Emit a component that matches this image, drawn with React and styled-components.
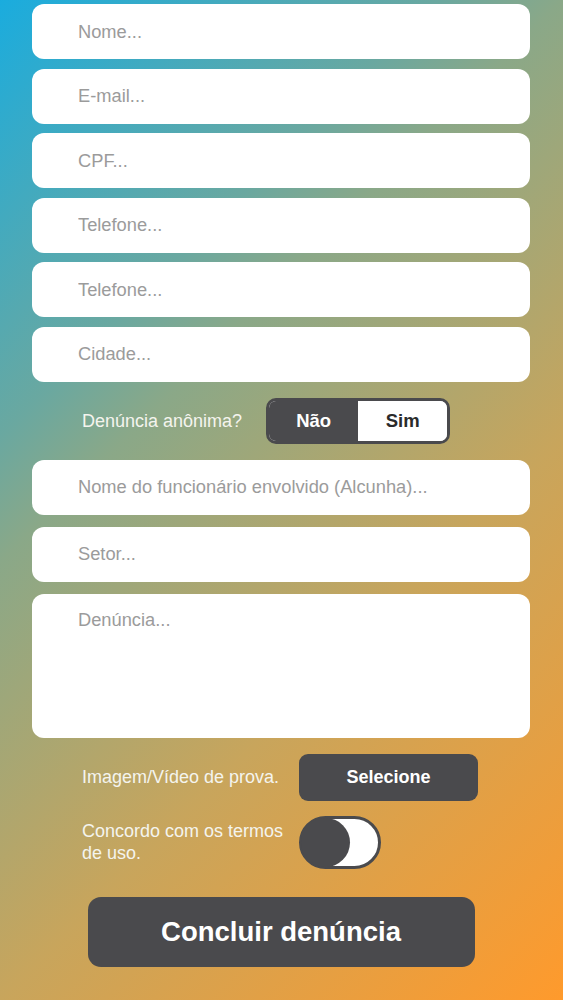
import { useState } from 'react';
import styled, { createGlobalStyle } from 'styled-components';

// ─── css ───────────────────────────────────────────────────────────────
const GlobalStyle = createGlobalStyle`
  html, body { margin: 0; padding: 0; }
  body {
    font-family: "Liberation Sans", Arial, sans-serif;
    min-height: 1000px;
    background: linear-gradient(135deg, #1aacde 0%, #6aa8a0 28%, #8aa888 36%, #c8a55c 64%, #ff9a2c 100%);
    background-attachment: fixed;
  }
  * { box-sizing: border-box; }
`;

const DARK = '#4a4a4d';

const Page = styled.div`
  display: flex;
  flex-direction: column;
  padding: 4px 33px 30px 32px;
  min-height: 1000px;
`;

const Fields = styled.div`
  display: flex;
  flex-direction: column;
  gap: ${({ $gap }) => $gap}px;
`;

const Input = styled.input`
  width: 100%;
  height: 55px;
  border: none;
  outline: none;
  border-radius: 12px;
  background: #fff;
  padding: 0 20px 0 46px;
  font-family: inherit;
  font-size: 18.3px;
  color: #333;
  &::placeholder { color: #9b9b9b; }
`;

const TextArea = styled.textarea`
  width: 100%;
  height: 144px;
  border: none;
  outline: none;
  resize: none;
  border-radius: 12px;
  background: #fff;
  padding: 15px 20px 0 46px;
  font-family: inherit;
  font-size: 18.3px;
  color: #333;
  display: block;
  &::placeholder { color: #9b9b9b; }
`;

const Row = styled.div`
  display: flex;
  align-items: center;
  padding-left: 50px;
  gap: ${({ $gap }) => $gap || 0}px;
  margin: ${({ $m }) => $m};
`;

const Label = styled.span`
  color: #f4f4ee;
  font-size: 18px;
  line-height: 22px;
  width: ${({ $w }) => ($w ? `${$w}px` : 'auto')};
  flex-shrink: 0;
`;

const Segmented = styled.div`
  display: flex;
  width: 184px;
  height: 46px;
  border: 3px solid ${DARK};
  border-radius: 10px;
  overflow: hidden;
  background: #fff;
`;

const Segment = styled.button`
  flex: 1;
  border: none;
  font-family: inherit;
  font-weight: bold;
  font-size: 18.5px;
  cursor: pointer;
  background: ${({ $active }) => ($active ? DARK : '#fff')};
  color: ${({ $active }) => ($active ? '#fff' : '#2b2b2b')};
`;

const DarkButton = styled.button`
  border: none;
  background: ${DARK};
  color: #fff;
  font-family: inherit;
  font-weight: bold;
  cursor: pointer;
  width: ${({ $w }) => $w}px;
  height: ${({ $h }) => $h}px;
  border-radius: ${({ $r }) => $r}px;
  font-size: ${({ $fs }) => $fs}px;
`;

const Switch = styled.button`
  position: relative;
  width: 82px;
  height: 53px;
  border: 3px solid ${DARK};
  border-radius: 27px;
  background: #fff;
  padding: 0;
  cursor: pointer;
`;

const Knob = styled.span`
  position: absolute;
  top: -1px;
  left: ${({ $on }) => ($on ? '30px' : '-1px')};
  width: 49px;
  height: 49px;
  border-radius: 50%;
  background: ${DARK};
  transition: left 0.2s;
`;

const Footer = styled.div`
  display: flex;
  justify-content: center;
  margin-top: 28px;
`;

export default function App() {
  const [anon, setAnon] = useState(false);
  const [agree, setAgree] = useState(false);

  return (
    <>
      <GlobalStyle />
      <Page>
        <Fields $gap={9.6}>
          <Input placeholder="Nome..." />
          <Input placeholder="E-mail..." />
          <Input placeholder="CPF..." />
          <Input placeholder="Telefone..." />
          <Input placeholder="Telefone..." />
          <Input placeholder="Cidade..." />
        </Fields>

        <Row $gap={24} $m="16px 0 16px">
          <Label>Denúncia anônima?</Label>
          <Segmented>
            <Segment $active={!anon} onClick={() => setAnon(false)}>Não</Segment>
            <Segment $active={anon} onClick={() => setAnon(true)}>Sim</Segment>
          </Segmented>
        </Row>

        <Fields $gap={12}>
          <Input placeholder="Nome do funcionário envolvido (Alcunha)..." />
          <Input placeholder="Setor..." />
          <TextArea placeholder="Denúncia..." />
        </Fields>

        <Row $m="16px 0 0">
          <Label $w={217}>Imagem/Vídeo de prova.</Label>
          <DarkButton $w={179} $h={47} $r={9} $fs={18}>Selecione</DarkButton>
        </Row>

        <Row $m="15px 0 0">
          <Label $w={217}>Concordo com os termos de uso.</Label>
          <Switch onClick={() => setAgree(!agree)}>
            <Knob $on={agree} />
          </Switch>
        </Row>

        <Footer>
          <DarkButton $w={387} $h={70} $r={13} $fs={27.5}>Concluir denúncia</DarkButton>
        </Footer>
      </Page>
    </>
  );
}
